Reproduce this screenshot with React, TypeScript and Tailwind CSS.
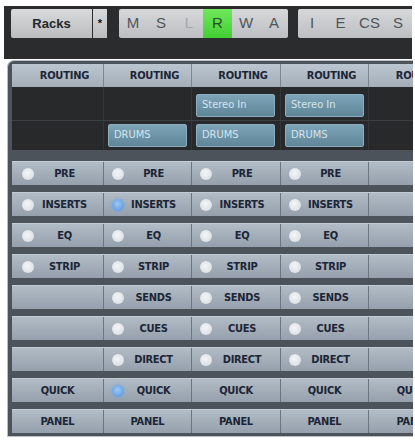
import React from 'react';

type CellKind = 'o' | 'b' | 't' | '-';

interface RowSpec {
  label: string;
  cells: string; // one char per column
}

const COL_W = ['w-[92px]', 'w-[88px]', 'w-[89px]', 'w-[88px]', 'w-[90px]'];

const ROWS: RowSpec[] = [
  { label: 'PRE', cells: 'oooo-' },
  { label: 'INSERTS', cells: 'oboo-' },
  { label: 'EQ', cells: 'oooo-' },
  { label: 'STRIP', cells: 'oooo-' },
  { label: 'SENDS', cells: '-ooo-' },
  { label: 'CUES', cells: '-ooo-' },
  { label: 'DIRECT', cells: '-ooo-' },
  { label: 'QUICK', cells: 'tbttt' },
  { label: 'PANEL', cells: 'ttttt' },
];

const Led: React.FC<{ on?: boolean }> = ({ on }) =>
  on ? (
    <span className="block w-[12px] h-[12px] shrink-0 rounded-full bg-[radial-gradient(circle_at_45%_40%,#9cc8f4,#4f8fdc)] shadow-[0_0_3px_#6aa8ee]" />
  ) : (
    <span className="block w-[12px] h-[12px] shrink-0 rounded-full bg-[radial-gradient(circle_at_45%_40%,#f4f6f8,#d3d9df)]" />
  );

const StripCell: React.FC<{ kind: CellKind; label: string; col: number }> = ({ kind, label, col }) => {
  const base = `${COL_W[col]} h-full shrink-0 border-r border-[#6c7680] bg-gradient-to-b from-[#b1bcc6] to-[#95a0ac]`;
  if (kind === '-') return <div className={base} />;
  if (kind === 't')
    return <div className={`${base} flex items-center justify-center pt-[2px]`}>{label}</div>;
  return (
    <div className={`${base} flex items-center ${col === 0 ? 'pl-[10px]' : 'pl-[8px]'}`}>
      <Led on={kind === 'b'} />
      <span className="flex-1 text-center pr-[8px] pt-[2px]">{label}</span>
    </div>
  );
};

const TopKey: React.FC<{ k: string; className?: string }> = ({ k, className = '' }) => (
  <div className={`w-[28px] h-full flex items-center justify-center ${className}`}>{k}</div>
);

export default function App() {
  return (
    <div className="w-[415px] h-[443px] bg-white overflow-hidden font-['Liberation_Sans',Arial,sans-serif]">
      {/* top toolbar */}
      <div className="ml-[4px] mt-[6px] w-[408px] h-[53px] bg-[#2b2c2e] pt-[3px] pl-[7px] flex items-start">
        <div className="w-[81px] h-[29px] rounded-l-[2px] bg-gradient-to-b from-[#d8dadc] to-[#babcbe] flex items-center justify-center text-[13px] font-bold text-[#23262a]">
          Racks
        </div>
        <div className="ml-[1px] w-[14px] h-[29px] bg-gradient-to-b from-[#d8dadc] to-[#babcbe] flex items-center justify-center text-[11px] font-bold text-[#111]">
          *
        </div>
        <div className="ml-[12px] w-[169px] h-[29px] rounded-[2px] overflow-hidden bg-gradient-to-b from-[#d6d8da] to-[#bcbec1] flex text-[15px] text-[#50555b]">
          <TopKey k="M" />
          <TopKey k="S" />
          <TopKey k="L" className="text-[#a3a8ad]" />
          <TopKey k="R" className="w-[29px] bg-gradient-to-b from-[#6fe85c] to-[#41cf31] text-[#24502a]" />
          <TopKey k="W" />
          <TopKey k="A" />
        </div>
        <div className="ml-[10px] w-[114px] h-[29px] rounded-l-[2px] bg-gradient-to-b from-[#d6d8da] to-[#bcbec1] flex text-[15px] text-[#50555b]">
          <TopKey k="I" />
          <TopKey k="E" className="w-[29px]" />
          <TopKey k="CS" className="w-[29px]" />
          <TopKey k="S" />
        </div>
      </div>

      {/* mixer panel */}
      <div className="ml-[7px] mt-[1px] w-[406px] h-[377px] rounded-tl-[7px] border-l border-t border-b border-[#b9bfc5] bg-[#4c535a] pt-[3px] pl-[4px] overflow-hidden font-['DejaVu_Sans_Condensed','Liberation_Sans',sans-serif]">
        {/* header */}
        <div className="flex h-[23px] w-max text-[11px] font-bold text-[#1c2536] tracking-[-0.2px]">
          {COL_W.map((w, i) => (
            <div
              key={i}
              className={`${w} shrink-0 h-full border-r border-[#7c8792] bg-gradient-to-b from-[#bcc6d0] to-[#a3aeb9] flex items-center justify-center pl-[14px] pt-[2px]`}
            >
              ROUTING
            </div>
          ))}
        </div>

        {/* routing slots */}
        <div className="w-max bg-[#27292b] text-[11px] text-[#d5e4ec]">
          <div className="flex h-[34px] border-b border-[#3d4043]">
            {COL_W.map((w, i) => (
              <div key={i} className={`${w} shrink-0 h-full border-r border-[#34373a] flex items-end pb-[3px] pl-[4px]`}>
                {(i === 2 || i === 3) && (
                  <div className="w-[79px] h-[23px] rounded-[2px] border border-[#8cadbf] bg-gradient-to-b from-[#7ea4b8] to-[#5f8599] flex items-center pl-[5px]">
                    Stereo In
                  </div>
                )}
              </div>
            ))}
          </div>
          <div className="flex h-[29px]">
            {COL_W.map((w, i) => (
              <div key={i} className={`${w} shrink-0 h-full border-r border-[#34373a] flex items-center pl-[4px]`}>
                {i >= 1 && i <= 3 && (
                  <div className="w-[79px] h-[23px] rounded-[2px] border border-[#8cadbf] bg-gradient-to-b from-[#7ea4b8] to-[#5f8599] flex items-center pl-[5px]">
                    DRUMS
                  </div>
                )}
              </div>
            ))}
          </div>
        </div>

        {/* channel strip switches */}
        <div className="mt-[11px] flex flex-col gap-[7px] text-[11px] font-bold text-[#1c2536] tracking-[-0.3px]">
          {ROWS.map((row) => (
            <div key={row.label} className="flex h-[24px] w-max border-t border-[#c3ccd5]">
              {row.cells.split('').map((c, i) => (
                <StripCell key={i} kind={c as CellKind} label={row.label} col={i} />
              ))}
            </div>
          ))}
        </div>
      </div>
    </div>
  );
}
